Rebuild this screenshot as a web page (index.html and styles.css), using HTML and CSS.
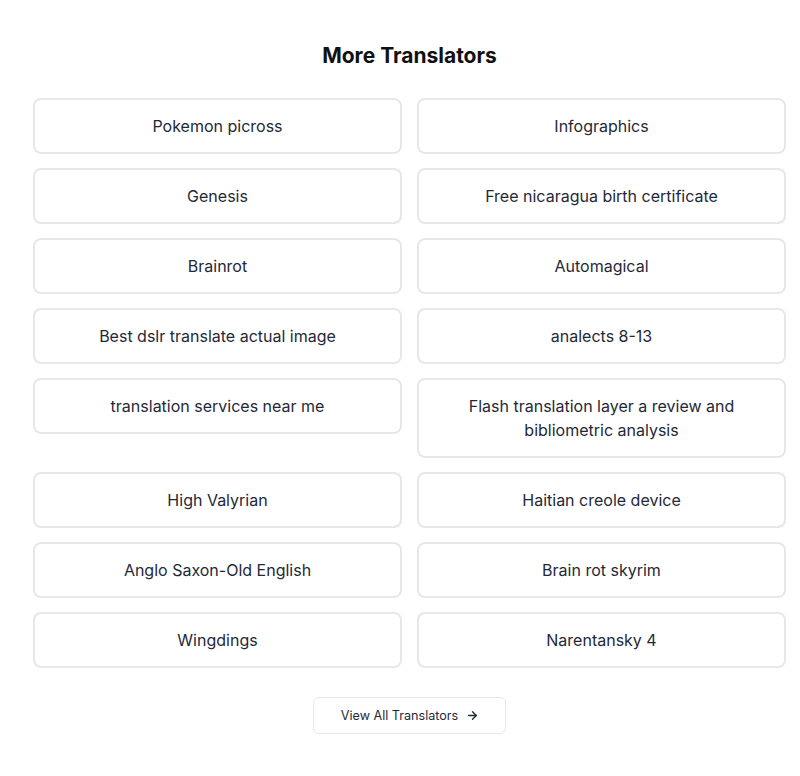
FILE: index.html
```html
<!DOCTYPE html>
<html lang="en">
<head>
    <meta charset="UTF-8">
    <meta name="viewport" content="width=device-width, initial-scale=1.0">
    <title>More Translators</title>
    <link rel="stylesheet" href="styles.css">
</head>
<body>

    <div class="translators">
        <h2>More Translators</h2>

        <div class="translator-grid">
            <a href="#" class="translator-card">Pokemon picross</a>
            <a href="#" class="translator-card">Infographics</a>
            <a href="#" class="translator-card">Genesis</a>
            <a href="#" class="translator-card">Free nicaragua birth certificate</a>
            <a href="#" class="translator-card">Brainrot</a>
            <a href="#" class="translator-card">Automagical</a>
            <a href="#" class="translator-card">Best dslr translate actual image</a>
            <a href="#" class="translator-card">analects 8-13</a>
            <a href="#" class="translator-card">translation services near me</a>
            <a href="#" class="translator-card">Flash translation layer a review and bibliometric analysis</a>
            <a href="#" class="translator-card">High Valyrian</a>
            <a href="#" class="translator-card">Haitian creole device</a>
            <a href="#" class="translator-card">Anglo Saxon-Old English</a>
            <a href="#" class="translator-card">Brain rot skyrim</a>
            <a href="#" class="translator-card">Wingdings</a>
            <a href="#" class="translator-card">Narentansky 4</a>
        </div>

        <div class="view-all">
            <a href="#" class="view-all-btn">
                View All Translators
                <svg width="13" height="13" viewBox="0 0 24 24" fill="none" stroke="currentColor" stroke-width="2.4" stroke-linecap="round" stroke-linejoin="round">
                    <path d="M5 12h14"/>
                    <path d="M12 5l7 7-7 7"/>
                </svg>
            </a>
        </div>
    </div>

</body>
</html>
```

FILE: styles.css
```css
body {
    font-family: Inter, "Noto Sans", Arial, sans-serif;
    margin: 0;
    padding: 0;
    background-color: #ffffff;
    color: #1f2937;
}

.translators {
    padding: 42px 14px 40px 33px;
}

.translators h2 {
    text-align: center;
    font-size: 21px;
    line-height: 28px;
    font-weight: 700;
    color: #111111;
    margin: 0 0 28px;
}

.translator-grid {
    display: grid;
    grid-template-columns: 1fr 1fr;
    column-gap: 15px;
    row-gap: 14px;
    align-items: start;
}

.translator-card {
    display: block;
    border: 2px solid #e5e7eb;
    border-radius: 8px;
    padding: 14px 40px;
    font-size: 16px;
    line-height: 24px;
    text-align: center;
    color: #1f2937;
    text-decoration: none;
}

.translator-card:hover {
    background-color: #f9fafb;
}

.view-all {
    display: flex;
    justify-content: center;
    margin-top: 29px;
}

.view-all-btn {
    display: inline-flex;
    align-items: center;
    gap: 8px;
    padding: 8px 26px 8px 27px;
    border: 1px solid #e5e7eb;
    border-radius: 6px;
    font-size: 12.6px;
    line-height: 19px;
    color: #1f2937;
    text-decoration: none;
}

.view-all-btn:hover {
    background-color: #f9fafb;
}
```
